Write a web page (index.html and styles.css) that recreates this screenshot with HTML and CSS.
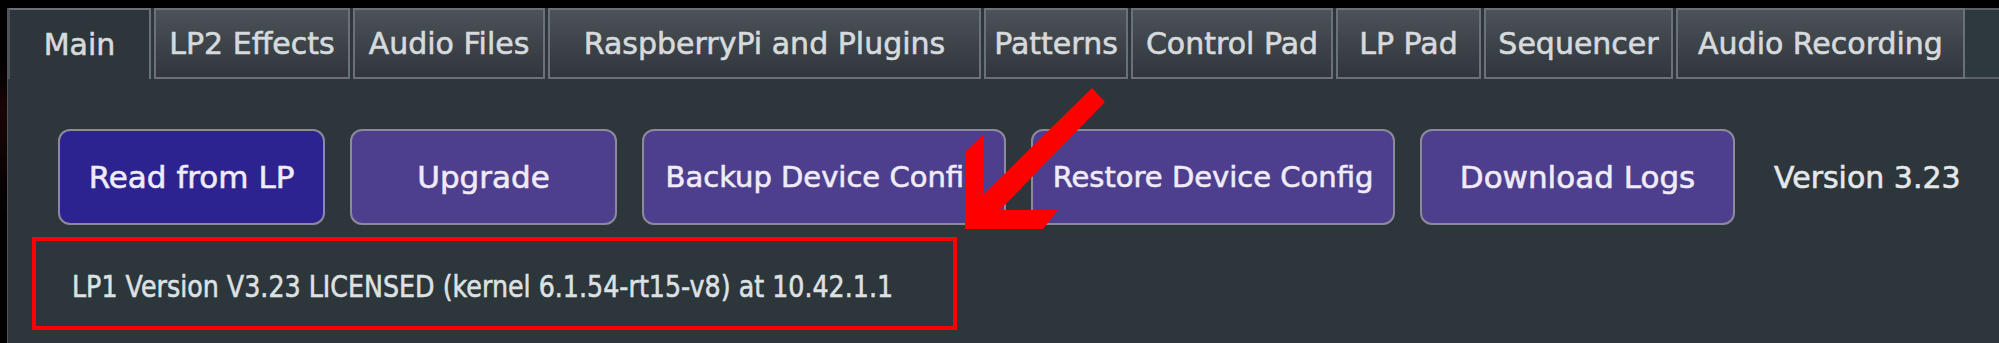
FILE: index.html
```html
<!DOCTYPE html>
<html lang="en">
<head>
  <meta charset="UTF-8">
  <title>LP Control - Main</title>
  <link rel="stylesheet" href="styles.css">
</head>
<body>

  <div class="screen">
    <div class="window">

      <nav class="tabs">
        <div class="tab active">Main</div>
        <div class="tab">LP2 Effects</div>
        <div class="tab">Audio Files</div>
        <div class="tab">RaspberryPi and Plugins</div>
        <div class="tab">Patterns</div>
        <div class="tab">Control Pad</div>
        <div class="tab">LP Pad</div>
        <div class="tab">Sequencer</div>
        <div class="tab">Audio Recording</div>
        <div class="tab-fill"></div>
      </nav>

      <section class="main-pane">
        <div class="actions">
          <button class="btn btn-primary btn-narrow">Read from LP</button>
          <button class="btn btn-narrow">Upgrade</button>
          <button class="btn btn-wide">Backup Device Config</button>
          <button class="btn btn-wide">Restore Device Config</button>
          <button class="btn btn-medium">Download Logs</button>
          <span class="version">Version 3.23</span>
        </div>

        <!-- status line, boxed in red for the callout -->
        <div class="status">
          <span class="status-text">LP1 Version V3.23 LICENSED (kernel 6.1.54-rt15-v8) at 10.42.1.1</span>
        </div>
      </section>

    </div>

    <svg class="callout-arrow" width="1999" height="343" viewBox="0 0 1999 343">
      <polygon points="1092,88 1105,102 1000,210 1058,210 1043,229 965,229 965,152 983,135 983,195" />
    </svg>
  </div>

</body>
</html>
```

FILE: styles.css
```css
body {
  margin: 0;
  background-color: #000;
  font-family: 'DejaVu Sans', 'Liberation Sans', sans-serif;
  overflow: hidden;
}

.screen {
  position: relative;
  height: 343px;
  padding-top: 8px;
  box-sizing: border-box;
  background: linear-gradient(#000 60px, #1a0606 110px, #000 220px);
}

.window {
  margin-left: 7px;
  height: 335px;
  background-color: #2d363b;
  border-left: 1px solid #4d555a;
}

/* tab strip */
.tabs {
  display: grid;
  grid-template-columns: 143px 196px 192px 433px 144px 202px 145px 189px 289px 1fr;
  column-gap: 3px;
  height: 71px;
}

.tab {
  display: flex;
  align-items: center;
  justify-content: center;
  border: 2px solid #6b7176;
  background: linear-gradient(#4b5258, #30363b);
  color: #d6dadd;
  font-size: 30px;
  white-space: nowrap;
  -webkit-text-stroke: 0.6px #d6dadd;
}

.tab.active {
  background: #2d363b;
  border-bottom: none;
  border-left-color: #4d555a;
}

.tab-fill {
  border-top: 2px solid #5a6166;
  border-bottom: 2px solid #5a6166;
  margin-left: -3px;
  background-color: #2e393e;
}

/* main pane */
.main-pane {
  padding: 50px 0 0 24px;
}

.actions {
  display: flex;
  align-items: center;
  gap: 25px;
  margin-left: 26px;
}

.btn {
  height: 96px;
  border: 2px solid #8c899b;
  border-radius: 12px;
  background-color: #4e3f8e;
  color: #efebf7;
  font-family: inherit;
  font-size: 31px;
  white-space: nowrap;
  overflow: hidden;
  padding: 0;
  -webkit-text-stroke: 0.6px #efebf7;
}

.btn-primary {
  background-color: #2d2390;
}

.btn-narrow {
  width: 267px;
}

.btn-wide {
  width: 364px;
  font-size: 29px;
}

.btn-medium {
  width: 315px;
}

.version {
  margin-left: 14px;
  color: #e4e8eb;
  font-size: 30px;
  white-space: nowrap;
  -webkit-text-stroke: 0.6px #e4e8eb;
}

.status {
  display: flex;
  align-items: center;
  box-sizing: border-box;
  width: 925px;
  height: 93px;
  margin-top: 12px;
  padding: 5px 0 0 36px;
  border: 4px solid #ff0000;
}

.status-text {
  display: inline-block;
  color: #dde1e4;
  font-size: 30px;
  white-space: nowrap;
  transform: scaleX(0.845);
  transform-origin: left center;
  -webkit-text-stroke: 0.6px #dde1e4;
}

.callout-arrow {
  position: absolute;
  left: 0;
  top: 0;
  pointer-events: none;
}

.callout-arrow polygon {
  fill: #ff0000;
}
```
